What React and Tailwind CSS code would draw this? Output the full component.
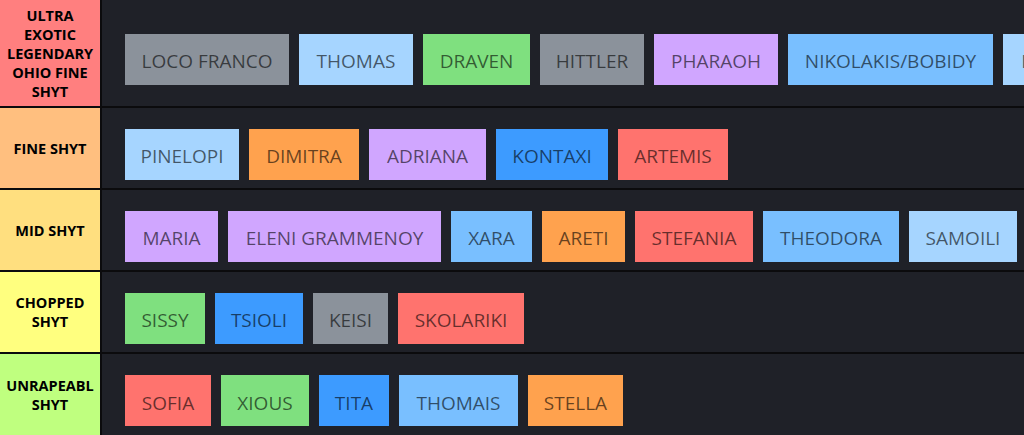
import React from "react";

const C = {
  gray: "bg-[#8b929b]",
  pale: "bg-[#a6d5ff]",
  green: "bg-[#7fe07f]",
  purple: "bg-[#d0a6ff]",
  sky: "bg-[#79bfff]",
  orange: "bg-[#ffa24e]",
  blue: "bg-[#3d9bff]",
  red: "bg-[#ff736e]",
};

const tiers = [
  {
    label: "ULTRA\nEXOTIC\nLEGENDARY\nOHIO FINE\nSHYT",
    color: "bg-[#ff7f7f]",
    h: "h-[106px]",
    items: [
      ["LOCO FRANCO", C.gray, "w-[164px]"],
      ["THOMAS", C.pale, "w-[114px]"],
      ["DRAVEN", C.green, "w-[107px]"],
      ["HITTLER", C.gray, "w-[104px]"],
      ["PHARAOH", C.purple, "w-[124px]"],
      ["NIKOLAKIS/BOBIDY", C.sky, "w-[205px]"],
      ["DIMITRIS", C.pale, "w-[116px]"],
    ],
  },
  {
    label: "FINE SHYT",
    color: "bg-[#ffbf7f]",
    h: "h-[80px]",
    items: [
      ["PINELOPI", C.pale, "w-[114px]"],
      ["DIMITRA", C.orange, "w-[110px]"],
      ["ADRIANA", C.purple, "w-[117px]"],
      ["KONTAXI", C.blue, "w-[112px]"],
      ["ARTEMIS", C.red, "w-[110px]"],
    ],
  },
  {
    label: "MID SHYT",
    color: "bg-[#ffdf7f]",
    h: "h-[80px]",
    items: [
      ["MARIA", C.purple, "w-[93px]"],
      ["ELENI GRAMMENOY", C.purple, "w-[213px]"],
      ["XARA", C.sky, "w-[81px]"],
      ["ARETI", C.orange, "w-[83px]"],
      ["STEFANIA", C.red, "w-[118px]"],
      ["THEODORA", C.sky, "w-[136px]"],
      ["SAMOILI", C.pale, "w-[108px]"],
    ],
  },
  {
    label: "CHOPPED\nSHYT",
    color: "bg-[#ffff7f]",
    h: "h-[80px]",
    items: [
      ["SISSY", C.green, "w-[80px]"],
      ["TSIOLI", C.blue, "w-[88px]"],
      ["KEISI", C.gray, "w-[75px]"],
      ["SKOLARIKI", C.red, "w-[126px]"],
    ],
  },
  {
    label: "UNRAPEABL\nSHYT",
    color: "bg-[#bfff7f]",
    h: "h-[81px]",
    items: [
      ["SOFIA", C.red, "w-[86px]"],
      ["XIOUS", C.green, "w-[88px]"],
      ["TITA", C.blue, "w-[70px]"],
      ["THOMAIS", C.sky, "w-[119px]"],
      ["STELLA", C.orange, "w-[95px]"],
    ],
  },
];

export default function App() {
  return (
    <div className="w-[1024px] h-[435px] overflow-hidden bg-[#0b0b0d] flex flex-col gap-[2px] pb-[1px] font-['Open_Sans',sans-serif]">
      {tiers.map((t, i) => (
        <div key={i} className={`flex ${t.h} shrink-0 gap-[2px]`}>
          <div
            className={`${t.color} w-[100px] shrink-0 flex items-center justify-center text-center whitespace-pre-line font-bold text-[14.5px] leading-[19px] text-black`}
          >
            {t.label}
          </div>
          <div className="flex-1 min-w-0 bg-[#1f2128] flex items-center gap-[10px] pl-[23px] overflow-hidden">
            {t.items.map(([name, bg, w], j) => (
              <div
                key={j}
                className={`${bg} ${w} h-[51px] mt-[12px] shrink-0 flex items-center justify-center pt-[5px] whitespace-nowrap text-[19px] text-black/60`}
              >
                {name}
              </div>
            ))}
          </div>
        </div>
      ))}
    </div>
  );
}
